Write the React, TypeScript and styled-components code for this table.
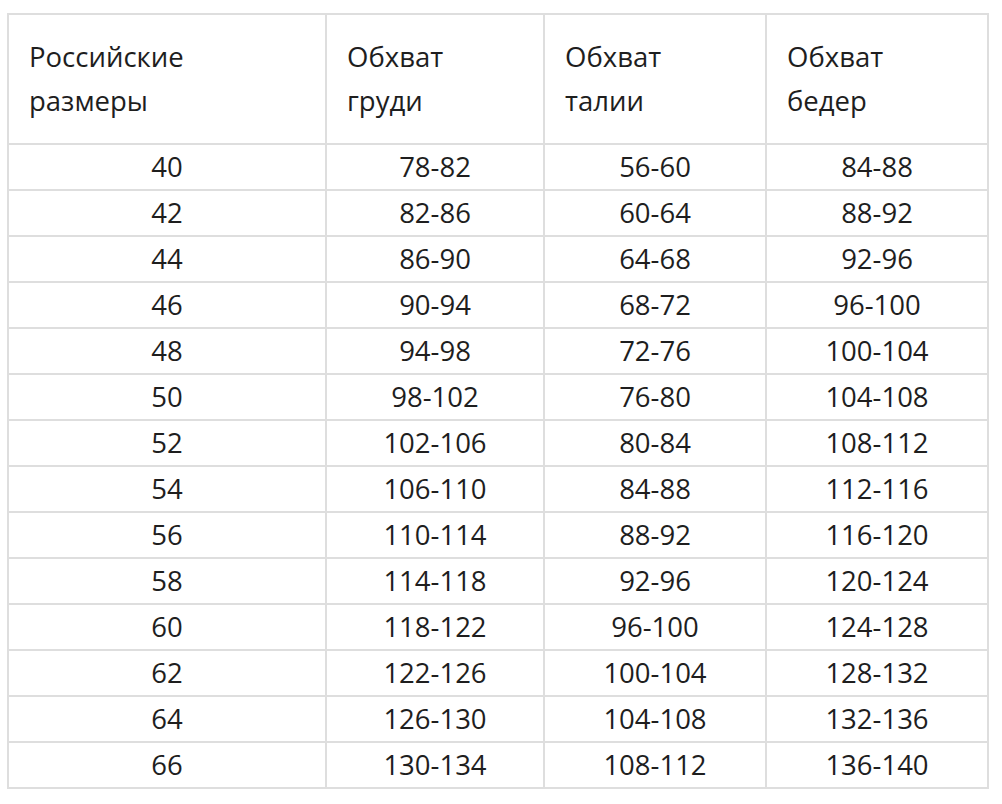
import React from "react";
import styled, { createGlobalStyle } from "styled-components";

const Global = createGlobalStyle`
  html, body { margin: 0; padding: 0; background: #fff; }
  body { font-family: "Open Sans", "Noto Sans", sans-serif; color: #1e1e1e; }
`;

const Page = styled.div`
  padding: 13px 0 0 7px;
`;

const Table = styled.table`
  width: 980px;
  border-collapse: collapse;
  table-layout: fixed;
  font-size: 27.5px;
  border: 2px solid #dedede;
`;

const Col = styled.col<{ $w: number }>`
  width: ${(p) => p.$w}px;
`;

const Head = styled.th`
  font-weight: 400;
  text-align: left;
  vertical-align: middle;
  height: 130px;
  padding: 0 20px;
  line-height: 44px;
  border: 2px solid #dedede;
  box-sizing: border-box;
`;

const Cell = styled.td`
  text-align: center;
  height: 46px;
  padding: 0;
  line-height: 44px;
  border: 2px solid #dedede;
  box-sizing: border-box;
`;

const widths = [318, 218, 222, 222];

const heads: [string, string][] = [
  ["Российские", "размеры"],
  ["Обхват", "груди"],
  ["Обхват", "талии"],
  ["Обхват", "бедер"],
];

const rows: [string, string, string, string][] = [
  ["40", "78-82", "56-60", "84-88"],
  ["42", "82-86", "60-64", "88-92"],
  ["44", "86-90", "64-68", "92-96"],
  ["46", "90-94", "68-72", "96-100"],
  ["48", "94-98", "72-76", "100-104"],
  ["50", "98-102", "76-80", "104-108"],
  ["52", "102-106", "80-84", "108-112"],
  ["54", "106-110", "84-88", "112-116"],
  ["56", "110-114", "88-92", "116-120"],
  ["58", "114-118", "92-96", "120-124"],
  ["60", "118-122", "96-100", "124-128"],
  ["62", "122-126", "100-104", "128-132"],
  ["64", "126-130", "104-108", "132-136"],
  ["66", "130-134", "108-112", "136-140"],
];

export default function App() {
  return (
    <>
      <Global />
      <Page>
        <Table>
          <colgroup>
            {widths.map((w, i) => (
              <Col key={i} $w={w} />
            ))}
          </colgroup>
          <thead>
            <tr>
              {heads.map(([a, b]) => (
                <Head key={a + b}>
                  {a}
                  <br />
                  {b}
                </Head>
              ))}
            </tr>
          </thead>
          <tbody>
            {rows.map((r) => (
              <tr key={r[0]}>
                {r.map((v, i) => (
                  <Cell key={i}>{v}</Cell>
                ))}
              </tr>
            ))}
          </tbody>
        </Table>
      </Page>
    </>
  );
}
